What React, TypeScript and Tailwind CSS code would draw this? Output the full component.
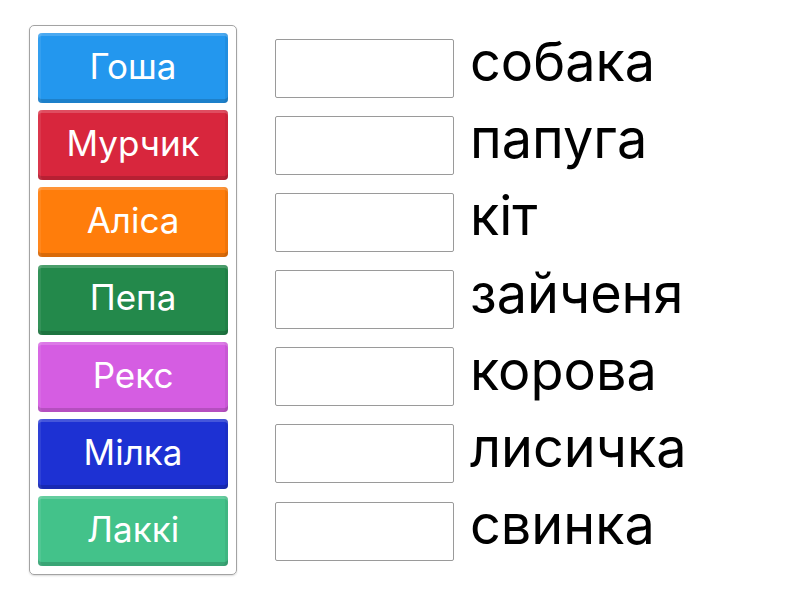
import React from "react";

const tiles = [
  { name: "Гоша", color: "bg-[#2397ee]" },
  { name: "Мурчик", color: "bg-[#d8263d]" },
  { name: "Аліса", color: "bg-[#ff7d0b]" },
  { name: "Пепа", color: "bg-[#23894b]" },
  { name: "Рекс", color: "bg-[#d55de2]" },
  { name: "Мілка", color: "bg-[#1d31d3]" },
  { name: "Лаккі", color: "bg-[#43c28a]" },
];

const words = ["собака", "папуга", "кіт", "зайченя", "корова", "лисичка", "свинка"];

export default function App() {
  return (
    <div className="w-[800px] h-[600px] bg-white flex items-start pt-[25px] pl-[29px] font-['Inter',sans-serif]">
      {/* tiles */}
      <div className="w-[208px] border border-[#a3a3a3] rounded-[5px] px-[8px] pt-[7px] pb-[8px] flex flex-col gap-[7.2px] shadow-[0_1px_2px_rgba(0,0,0,0.15)]">
        {tiles.map((t, i) => (
          <div
            key={i}
            className={`${t.color} h-[70px] rounded-[4px] flex items-center justify-center pb-[4px] text-white text-[35px] shadow-[inset_0_-4px_0_rgba(0,0,0,0.15),inset_0_3px_0_rgba(255,255,255,0.18),inset_3px_0_0_rgba(255,255,255,0.08),inset_-3px_0_0_rgba(0,0,0,0.06)]`}
          >
            {t.name}
          </div>
        ))}
      </div>

      {/* targets */}
      <div className="ml-[38px] pt-[8px] flex flex-col gap-[7.2px]">
        {words.map((w, i) => (
          <div key={i} className="h-[70px] flex items-center">
            <div className="w-[179px] h-[59px] border border-[#9a9a9a] rounded-[2px] bg-white shrink-0" />
            <div className="ml-[16px] text-[54px] leading-[60px] pb-[12px] text-black">{w}</div>
          </div>
        ))}
      </div>
    </div>
  );
}
